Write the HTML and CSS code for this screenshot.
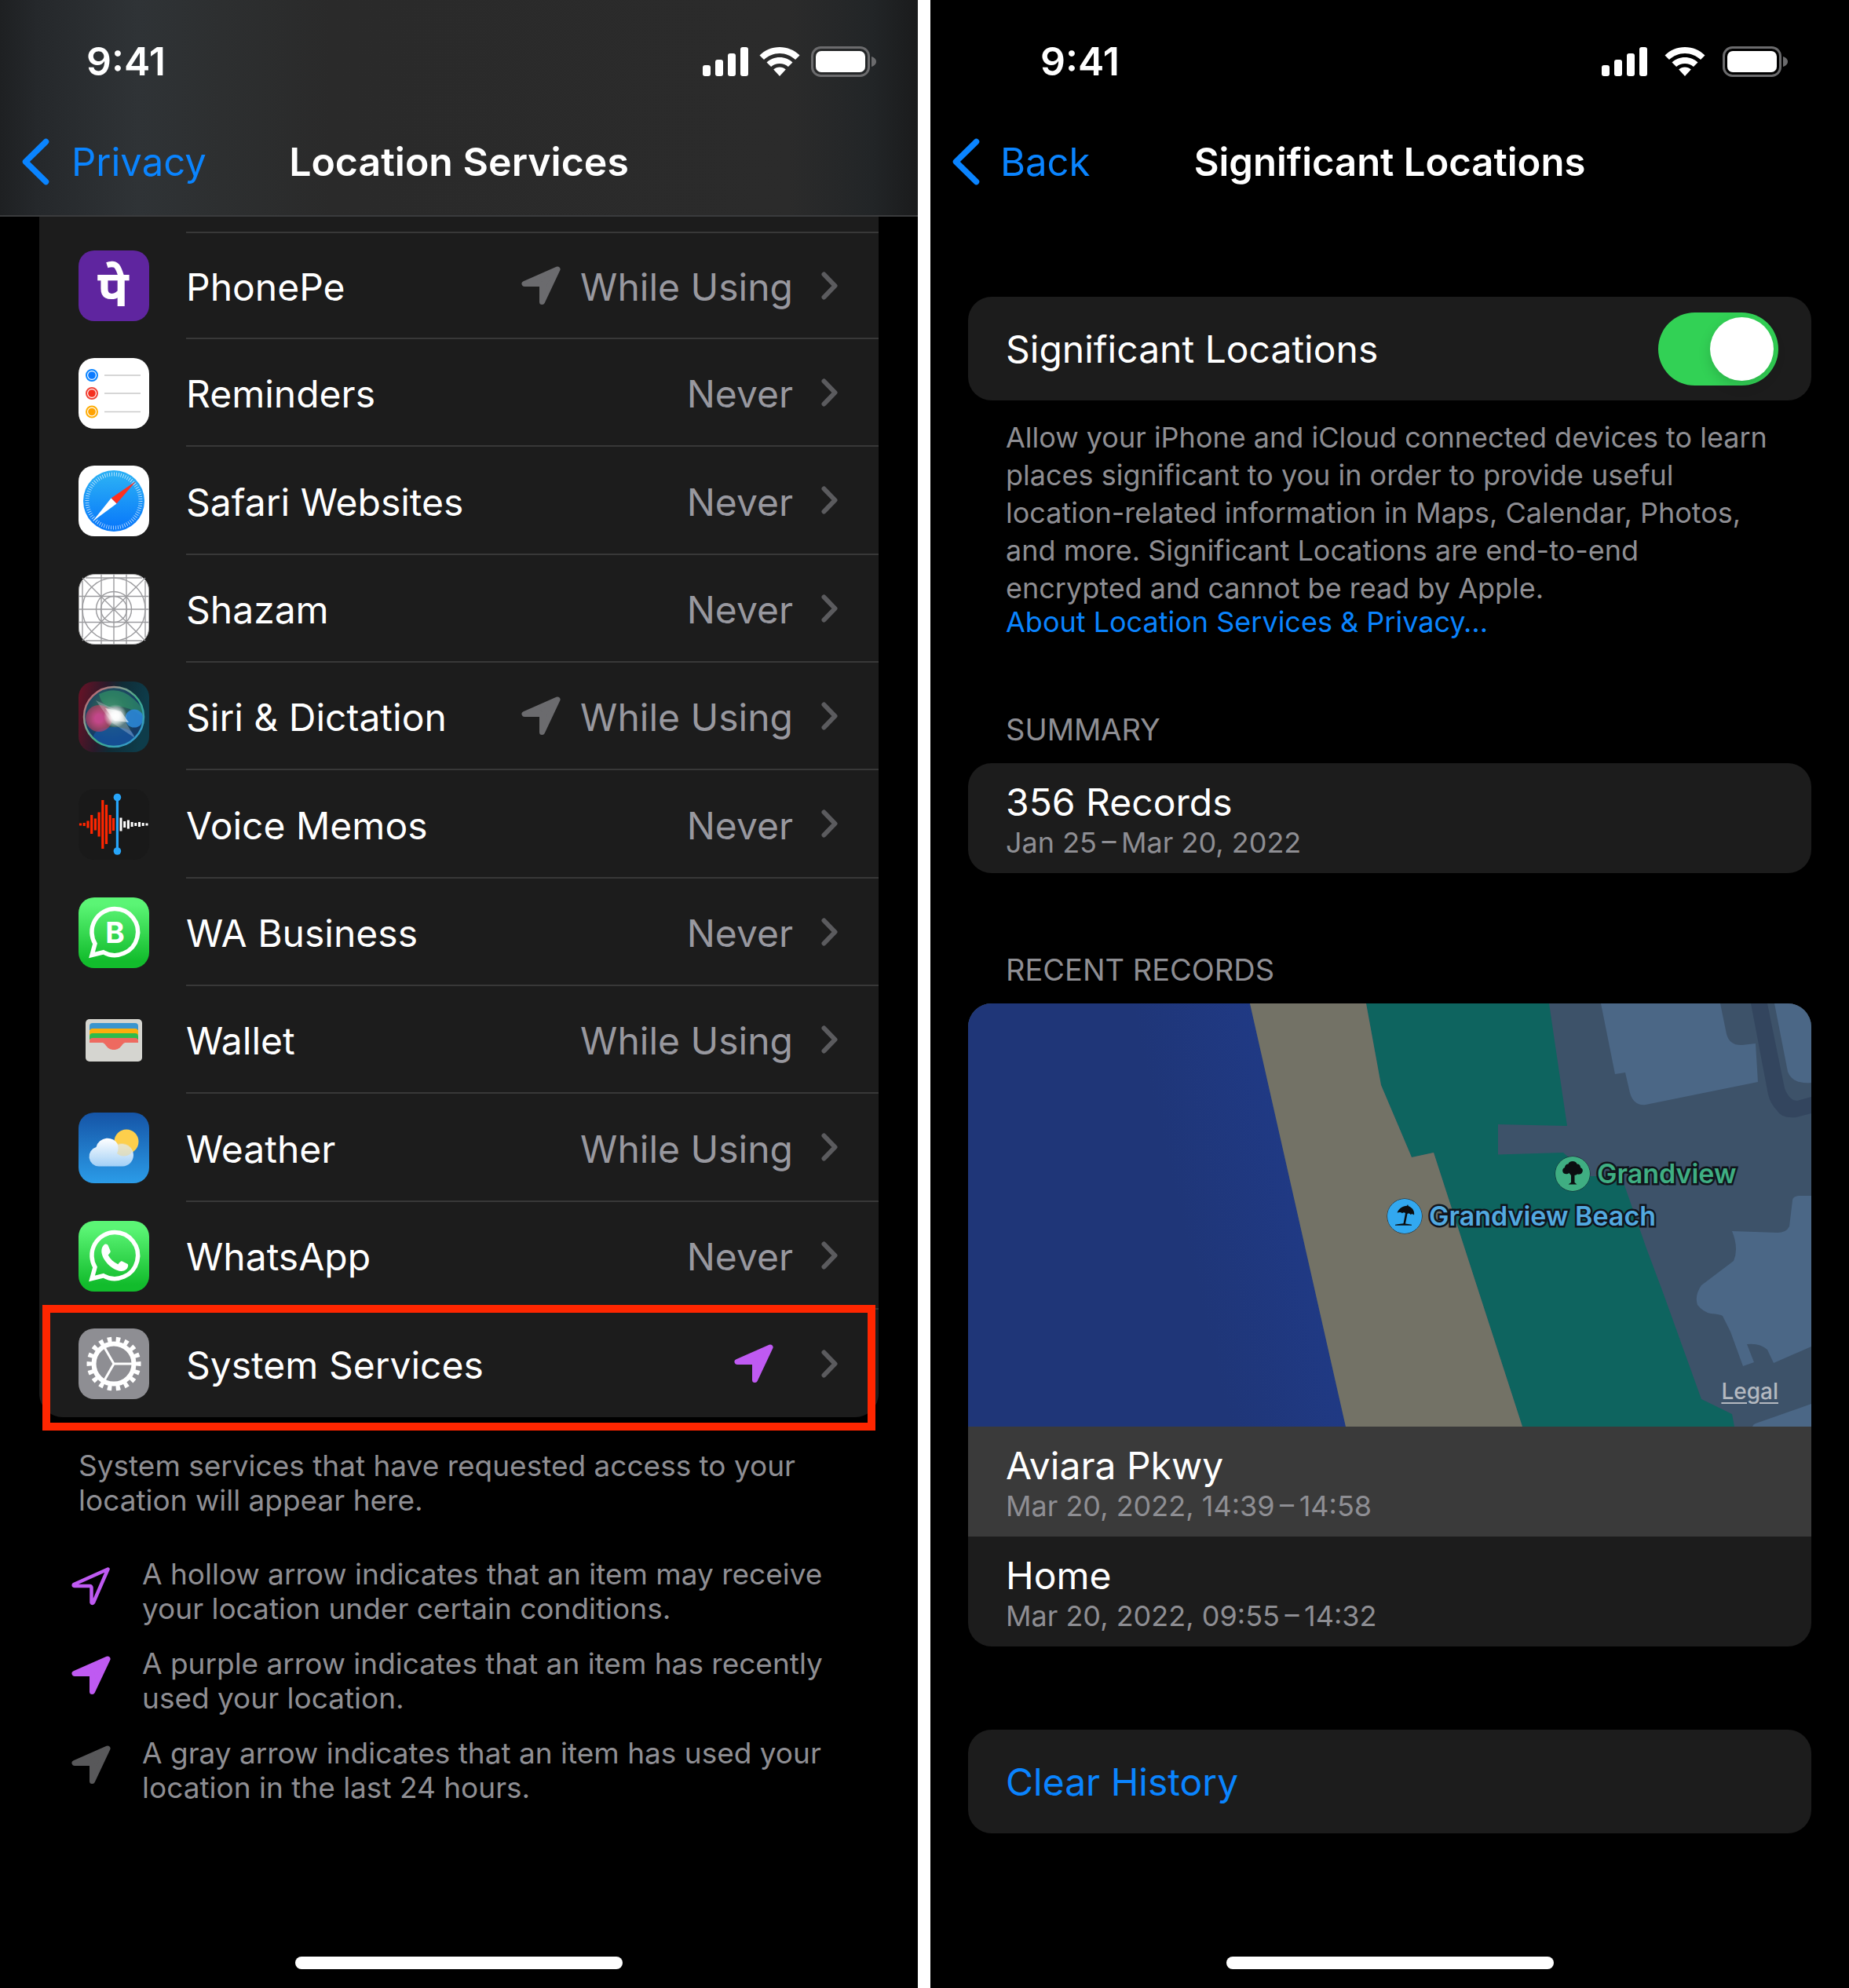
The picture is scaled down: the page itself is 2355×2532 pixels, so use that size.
FILE: index.html
```html
<!DOCTYPE html>
<html lang="en">
<head>
<meta charset="utf-8">
<meta name="viewport" content="width=device-width, initial-scale=1">
<title>Location Services</title>
<link rel="stylesheet" href="styles.css">
</head>
<body>
<svg class="defs" aria-hidden="true">
  <defs>
    <linearGradient id="green" x1="0" y1="0" x2="0" y2="1"><stop offset=".1" stop-color="#5bf575"/><stop offset=".9" stop-color="#12bc2c"/></linearGradient>
    <linearGradient id="sky" x1="0" y1="0" x2="0" y2="1"><stop offset="0" stop-color="#1554a6"/><stop offset="1" stop-color="#2b9ce8"/></linearGradient>
    <linearGradient id="cloud" x1="0" y1="0" x2="0" y2="1"><stop offset="0" stop-color="#fff"/><stop offset="1" stop-color="#a3d0f6"/></linearGradient>
    <linearGradient id="dial" x1="0" y1="0" x2="0" y2="1"><stop offset=".1" stop-color="#2aaef5"/><stop offset=".9" stop-color="#0a7bfa"/></linearGradient>
    <linearGradient id="siribg" x1="0" y1="0" x2="1" y2=".2"><stop offset="0" stop-color="#6b1226"/><stop offset=".4" stop-color="#2a1a2a"/><stop offset=".6" stop-color="#0f2c36"/><stop offset="1" stop-color="#0e3c4a"/></linearGradient>
    <linearGradient id="siriring" x1="0" y1="0" x2="1" y2="1"><stop offset="0" stop-color="#d8455e"/><stop offset=".3" stop-color="#8a9a90"/><stop offset=".55" stop-color="#3fae86"/><stop offset="1" stop-color="#2f8fe6"/></linearGradient>
    <radialGradient id="siriglow"><stop offset="0" stop-color="#fff"/><stop offset=".35" stop-color="#fff" stop-opacity=".9"/><stop offset="1" stop-color="#fff" stop-opacity="0"/></radialGradient>
    <radialGradient id="siripink"><stop offset=".3" stop-color="#c2478a"/><stop offset="1" stop-color="#d83a5e" stop-opacity=".5"/></radialGradient>
    <radialGradient id="siriball" cx=".45" cy=".4"><stop offset="0" stop-color="#6f8a84"/><stop offset=".5" stop-color="#2a5a58"/><stop offset="1" stop-color="#143a66"/></radialGradient>
    <linearGradient id="sea" gradientUnits="userSpaceOnUse" x1="270" y1="270" x2="440" y2="230"><stop offset="0" stop-color="#1f3678"/><stop offset="1" stop-color="#203a86"/></linearGradient>
    <symbol id="i-signal" viewBox="0 0 58 37"><rect x="0" y="23" width="10" height="14" rx="3"/><rect x="16" y="16" width="10" height="21" rx="3"/><rect x="32" y="8" width="10" height="29" rx="3"/><rect x="48" y="0" width="10" height="37" rx="3"/></symbol>
    <symbol id="i-wifi" viewBox="0 0 52 37"><path d="M26 0C36 0 45 4 51.500 10.500L46 16C40.600 11 33.700 8 26 8S11.400 11 6 16L.5 10.500C7 4 16 0 26 0zM26 13C32.500 13 38.300 15.400 42.500 19.500L36.900 25C34 22.400 30.200 21 26 21S18 22.400 15.100 25L9.500 19.500C13.700 15.400 19.500 13 26 13zM26 25.500C29 25.500 31.700 26.600 33.800 28.500L26 37L18.200 28.500C20.300 26.600 23 25.500 26 25.500z"/></symbol>
    <symbol id="i-battery" viewBox="0 0 83 39"><rect x="1.500" y="1.500" width="72" height="36" rx="11" fill="none" stroke="#6b6b6d" stroke-width="3"/><rect x="6" y="6" width="63" height="27" rx="7"/><path d="M77 13c3.500 1 6 3.500 6 6.500s-2.500 5.500-6 6.500z" fill="#6b6b6d"/></symbol>
    <symbol id="i-back" viewBox="0 0 36 60"><path d="M31.500 4.500L5.500 30l26 25.500" fill="none" stroke="currentColor" stroke-width="7.500" stroke-linecap="round" stroke-linejoin="round"/></symbol>
    <symbol id="i-chevron" viewBox="0 0 22 36"><path d="M3.500 3.500L17.500 18 3.500 32.500" fill="none" stroke="#5b5b5e" stroke-width="6" stroke-linecap="round" stroke-linejoin="round"/></symbol>
    <symbol id="i-arrow" viewBox="0 0 50 50"><path d="M46 4L4 22.500h20.500a2 2 0 0 1 2 2V45.500z" fill="currentColor" stroke="currentColor" stroke-width="7" stroke-linejoin="round"/></symbol>
    <symbol id="i-hollow" viewBox="0 0 50 50"><path d="M46.500 3.500L3 23q-1 2 1 2h19.500a2 2 0 0 1 2 2V46q1 2 2.500 0z" fill="none" stroke="currentColor" stroke-width="4.500" stroke-linejoin="round"/></symbol>
    <symbol id="i-bubble" viewBox="0 0 90 90"><path d="M46 14.500a29.500 29.500 0 1 1-14.200 55.300L17 73.500l4-14.600A29.500 29.500 0 0 1 46 14.500z" fill="none" stroke="#fff" stroke-width="5.500"/></symbol>
  </defs>
</svg>

<main class="screens">
  <section class="screen screen-services">
    <header class="top top-blur">
      <div class="status">
        <time class="clock">9:41</time>
        <div class="indicators">
          <svg class="signal"><use href="#i-signal"/></svg>
          <svg class="wifi"><use href="#i-wifi"/></svg>
          <svg class="battery"><use href="#i-battery"/></svg>
        </div>
      </div>
      <nav class="nav">
        <a class="back" href="#privacy"><svg><use href="#i-back"/></svg>Privacy</a>
        <h1>Location Services</h1>
      </nav>
    </header>

    <ul class="apps">
      <li><a class="app" href="#phonepe">
        <svg class="icon" viewBox="0 0 90 90"><rect width="90" height="90" rx="20" fill="#5f259f"/><text class="logo-text" x="44" y="71" text-anchor="middle">पे</text></svg>
        <span class="line"><span class="name">PhonePe</span><svg class="arrow gray"><use href="#i-arrow"/></svg><span class="value">While Using</span><svg class="chevron"><use href="#i-chevron"/></svg></span>
      </a></li>
      <li><a class="app" href="#reminders">
        <svg class="icon" viewBox="0 0 90 90"><rect width="90" height="90" rx="20" fill="#fff"/>
          <g stroke-width="2" fill="none"><circle cx="17" cy="22" r="7" stroke="#0a84ff"/><circle cx="17" cy="45" r="7" stroke="#f0453a"/><circle cx="17" cy="68.500" r="7" stroke="#fdae08"/></g>
          <circle cx="17" cy="22" r="4.800" fill="#0a7aff"/><circle cx="17" cy="45" r="4.800" fill="#f5301f"/><circle cx="17" cy="68.500" r="4.800" fill="#ffa200"/>
          <path d="M33 22h46M33 45h46M33 68.500h46" stroke="#c9c9c9" stroke-width="1.500"/></svg>
        <span class="line"><span class="name">Reminders</span><span class="value">Never</span><svg class="chevron"><use href="#i-chevron"/></svg></span>
      </a></li>
      <li><a class="app" href="#safari">
        <svg class="icon" viewBox="0 0 90 90"><rect width="90" height="90" rx="20" fill="#fff"/><circle cx="45" cy="45" r="39" fill="url(#dial)"/>
          <circle cx="45" cy="45" r="34" fill="none" stroke="#fff" stroke-opacity=".7" stroke-width="5" pathLength="144" stroke-dasharray=".6 1.400"/>
          <path d="M73 20L48.500 48.500 41.500 41.500z" fill="#ff3020"/><path d="M18 71L41.500 41.500 48.500 48.500z" fill="#fff"/></svg>
        <span class="line"><span class="name">Safari Websites</span><span class="value">Never</span><svg class="chevron"><use href="#i-chevron"/></svg></span>
      </a></li>
      <li><a class="app" href="#shazam">
        <svg class="icon" viewBox="0 0 90 90"><rect x=".5" y=".5" width="89" height="89" rx="20" fill="#fff" stroke="#aaa"/>
          <g fill="none" stroke="#9c9c9f" stroke-width="1.400"><path d="M5 9v72M29 0v90M45 0v90M61 0v90M85 9v72M9 5h72M0 28.500h90M0 45h90M0 61.500h90M9 85h72M5 5l80 80M85 5L5 85"/><circle cx="45" cy="45" r="40"/><circle cx="45" cy="45" r="22.500"/><circle cx="45" cy="45" r="16.500"/></g></svg>
        <span class="line"><span class="name">Shazam</span><span class="value">Never</span><svg class="chevron"><use href="#i-chevron"/></svg></span>
      </a></li>
      <li><a class="app" href="#siri">
        <svg class="icon" viewBox="0 0 90 90"><rect width="90" height="90" rx="20" fill="url(#siribg)"/><circle cx="45" cy="45" r="38" fill="url(#siriball)"/>
          <ellipse cx="45" cy="70" rx="26" ry="12" fill="#1657a6" opacity=".7"/><path d="M26 16Q50 4 70 22T80 44Q62 30 46 32T26 16z" fill="#2f9468" opacity=".65"/>
          <circle cx="26" cy="47" r="17" fill="url(#siripink)"/><circle cx="71" cy="47" r="11.500" fill="#2b86d6" opacity=".9"/>
          <path d="M22 24L52 38 72 72 42 52z" fill="#fff" opacity=".25"/><path d="M34 34L54 38 64 52 46 50z" fill="#fff" opacity=".6"/><circle cx="47" cy="44" r="15" fill="url(#siriglow)"/>
          <circle cx="45" cy="45" r="38" fill="none" stroke="url(#siriring)" stroke-width="2.500"/></svg>
        <span class="line"><span class="name">Siri &amp; Dictation</span><svg class="arrow gray"><use href="#i-arrow"/></svg><span class="value">While Using</span><svg class="chevron"><use href="#i-chevron"/></svg></span>
      </a></li>
      <li><a class="app" href="#voice-memos">
        <svg class="icon" viewBox="0 0 90 90"><rect width="90" height="90" rx="20" fill="#191919"/>
          <path d="M2.500 43.500v3M7.200 43v4M12 40.500v9M16.700 33v24M21.400 37.500v15M26.100 29.500v31M30.800 14v62M35.500 20v50M40.200 33v24M44.500 37v16" stroke="#ff2600" stroke-width="3.200"/>
          <path d="M54 36.500v17M58.700 41v8M63.400 39.500v11M68.100 42v6M72.800 43v4M77.500 42v6M82.200 43v4M87 43.500v3" stroke="#fff" stroke-width="3"/>
          <path d="M49.400 10v69" stroke="#27a5f9" stroke-width="3.200"/><circle cx="49.400" cy="10.500" r="4.800" fill="#27a5f9"/><circle cx="49.400" cy="79" r="4.800" fill="#27a5f9"/></svg>
        <span class="line"><span class="name">Voice Memos</span><span class="value">Never</span><svg class="chevron"><use href="#i-chevron"/></svg></span>
      </a></li>
      <li><a class="app" href="#wa-business">
        <svg class="icon" viewBox="0 0 90 90"><rect width="90" height="90" rx="20" fill="url(#green)"/><use href="#i-bubble"/><text class="logo-letter" x="46.500" y="58" text-anchor="middle">B</text></svg>
        <span class="line"><span class="name">WA Business</span><span class="value">Never</span><svg class="chevron"><use href="#i-chevron"/></svg></span>
      </a></li>
      <li><a class="app" href="#wallet">
        <svg class="icon" viewBox="0 0 90 90"><rect x="9" y="18" width="72" height="54" rx="5" fill="#d5d5d0"/>
          <path d="M14 32v-5a4 4 0 0 1 4-4h54a4 4 0 0 1 4 4v5z" fill="#3a95cf"/><path d="M14 38v-4a4 4 0 0 1 4-4h54a4 4 0 0 1 4 4v4z" fill="#fcae0c"/><path d="M14 44v-4a4 4 0 0 1 4-4h54a4 4 0 0 1 4 4v4z" fill="#2fbb4b"/>
          <path d="M14 48v-2a4 4 0 0 1 4-4h54a4 4 0 0 1 4 4v2H60c-5 0-5 9-15 9s-10-9-15-9z" fill="#ee6a60"/></svg>
        <span class="line"><span class="name">Wallet</span><span class="value">While Using</span><svg class="chevron"><use href="#i-chevron"/></svg></span>
      </a></li>
      <li><a class="app" href="#weather">
        <svg class="icon" viewBox="0 0 90 90"><rect width="90" height="90" rx="20" fill="url(#sky)"/><circle cx="61" cy="37" r="15.500" fill="#fdcf4c"/>
          <path d="M26 68.500a12.500 12.500 0 0 1-3.500-24.500 15 15 0 0 1 28-3A14.500 14.500 0 0 1 70 54c0 8-6 14.500-14 14.500z" fill="url(#cloud)"/><path d="M49 52a15 15 0 0 0 .5-12C58 37 68 42 68 49c0 5-12 10-19 3z" fill="#ead9a0" opacity=".6"/></svg>
        <span class="line"><span class="name">Weather</span><span class="value">While Using</span><svg class="chevron"><use href="#i-chevron"/></svg></span>
      </a></li>
      <li><a class="app" href="#whatsapp">
        <svg class="icon" viewBox="0 0 90 90"><rect width="90" height="90" rx="20" fill="url(#green)"/><use href="#i-bubble"/>
          <path d="M33 30c2-1 4-.5 5 2l2.500 6c.6 1.500 0 2.500-2.800 5.500 3 5.500 7 9.200 12.700 11.700 3-3.600 3.700-4.400 5.400-3.600l6 3c1.500.8 1.600 1.500 1.200 3.500-.8 4-5 6.300-9 5.900C43 63 29.500 50 29.300 38.500c0-4 1.700-7 3.700-8.500z" fill="#fff"/></svg>
        <span class="line"><span class="name">WhatsApp</span><span class="value">Never</span><svg class="chevron"><use href="#i-chevron"/></svg></span>
      </a></li>
      <li class="marked"><a class="app" href="#system-services">
        <svg class="icon" viewBox="0 0 90 90"><rect width="90" height="90" rx="20" fill="#8e8e93"/>
          <g fill="none" stroke="#fff"><circle cx="45" cy="45" r="25.500" stroke-width="6"/><circle cx="45" cy="45" r="30.500" stroke-width="8" pathLength="36" stroke-dasharray="1 1" stroke-dashoffset=".5"/><path d="M45 45h25M45 45L32.500 23.300M45 45L32.500 66.700" stroke-width="3"/></g></svg>
        <span class="line"><span class="name">System Services</span><svg class="arrow purple"><use href="#i-arrow"/></svg><svg class="chevron"><use href="#i-chevron"/></svg></span>
      </a></li>
    </ul>

    <p class="note">System services that have requested access to your location will appear here.</p>
    <ul class="legend">
      <li><svg class="arrow purple"><use href="#i-hollow"/></svg><span>A hollow arrow indicates that an item may receive your location under certain conditions.</span></li>
      <li><svg class="arrow purple"><use href="#i-arrow"/></svg><span>A purple arrow indicates that an item has recently used your location.</span></li>
      <li><svg class="arrow dim"><use href="#i-arrow"/></svg><span>A gray arrow indicates that an item has used your location in the last 24 hours.</span></li>
    </ul>
    <div class="home-bar"></div>
  </section>

  <section class="screen screen-significant">
    <header class="top">
      <div class="status">
        <time class="clock">9:41</time>
        <div class="indicators">
          <svg class="signal"><use href="#i-signal"/></svg>
          <svg class="wifi"><use href="#i-wifi"/></svg>
          <svg class="battery"><use href="#i-battery"/></svg>
        </div>
      </div>
      <nav class="nav">
        <a class="back" href="#back"><svg><use href="#i-back"/></svg>Back</a>
        <h1>Significant Locations</h1>
      </nav>
    </header>

    <div class="content">
      <div class="card setting">
        <label for="significant">Significant Locations</label>
        <input class="switch" type="checkbox" role="switch" id="significant" checked>
      </div>
      <p class="about">Allow your iPhone and iCloud connected devices to learn places significant to you in order to provide useful location-related information in Maps, Calendar, Photos, and more. Significant Locations are end-to-end encrypted and cannot be read by Apple.</p>
      <a class="about-link" href="#about">About Location Services &amp; Privacy…</a>

      <h2>SUMMARY</h2>
      <div class="card">
        <div class="record"><strong>356 Records</strong><span>Jan 25&thinsp;–&thinsp;Mar 20, 2022</span></div>
      </div>

      <h2 class="recent">RECENT RECORDS</h2>
      <div class="card">
        <div class="map">
          <svg viewBox="0 0 1074 539" preserveAspectRatio="xMidYMid slice" aria-hidden="true">
            <rect width="1074" height="539" fill="#3d5269"/>
            <path d="M0 0H359L481 539H0z" fill="url(#sea)"/>
            <path d="M507 0H740L763 156 675 154V192.500L758 190 792 220H832L864 312 885 368 934 504 973 523 976 539H706L593 190 565 196 526 104z" fill="#0e645f"/>
            <path d="M359 0H507L526 104 565 196 593 190 706 539H481z" fill="#737266"/>
            <g fill="#4b6786">
              <path d="M806 0L824 90 837 88 843 114Q848 131 863 129L1006 100 1003 51 986 53Q970 54 966 39L958 0z"/>
              <path d="M1027 0L1044 87Q1050 103 1074 101V0z"/>
              <path d="M1074 245H1058Q1050 246 1050 251L1046 284Q1042 292 1031 292L973 290Q982 312 975 328L934 359Q925 372 929 384 936 393 946 395 958 396 961 398L971 418 987 462 1001 457 992 434Q1008 432 1018 441L1026 458 1074 437z"/>
              <path d="M999 539Q1000 536 1003 535L1074 510V539z"/>
            </g>
            <path d="M997 0H1018L1040 108Q1046 124 1056 124L1074 119V140L1055 145Q1036 147 1030 136 1022 128 1019 116z" fill="#33455e"/>
          </svg>
          <span class="pin park"><svg viewBox="0 0 46 46"><circle cx="23" cy="23" r="22" fill="#3fae82" stroke="#12202a"/><path d="M23 7c3 0 5 1.500 5.500 3.500 3 0 4.500 2 4.500 4.500 2.500 1 3.500 3 2.500 5.500-1 3-4 3.500-6.500 3-1 1-2.500 1.300-3.500 1.300V34l3 2.500H17.500L21 34v-9l-2.500-3C16.500 24 11 24 10.300 20c-.5-2.500.7-4.300 2.700-5 0-2.500 2-4.500 4.500-4.500C18 8.500 20 7 23 7z" fill="#0b0d10"/></svg>Grandview</span>
          <span class="pin beach"><svg viewBox="0 0 46 46"><circle cx="23" cy="23" r="22" fill="#32a8f0" stroke="#12202a"/><path d="M27 8l.8 2C33 12 36 16.500 35 21.500c-1.500-1.300-3-1.500-4.500-.5-1-1.300-2.500-1.800-4-1L24 32.500l8 1.200v1H11v-1l10.500-1.500L24 19c-1.500-1-3-.8-4 .3-1.200-1.300-3.500-1.800-6.500-.8 2-5 7-8.700 12.500-8.700z" fill="#0b0d10"/></svg>Grandview Beach</span>
          <a class="legal" href="#legal">Legal</a>
        </div>
        <div class="record selected"><strong>Aviara Pkwy</strong><span>Mar 20, 2022, 14:39&thinsp;–&thinsp;14:58</span></div>
        <div class="record"><strong>Home</strong><span>Mar 20, 2022, 09:55&thinsp;–&thinsp;14:32</span></div>
      </div>

      <button class="card clear" type="button">Clear History</button>
    </div>
    <div class="home-bar"></div>
  </section>
</main>
</body>
</html>
```

FILE: styles.css
```css
* { box-sizing: border-box; }

body {
  margin: 0;
  background: #fff;
  color: #fff;
  font-family: Inter, "Noto Sans", sans-serif;
  font-size: 48px;
}

h1, h2, p, ul { margin: 0; padding: 0; }
ul { list-style: none; }
a { color: inherit; text-decoration: none; }
svg { display: block; flex: none; }
.defs { position: absolute; width: 0; height: 0; }

.screens {
  display: grid;
  grid-template-columns: 1169fr 1170fr;
  gap: 16px;
  min-height: 100vh;
}

.screen {
  display: flex;
  flex-direction: column;
  background: #000;
}

/* Status and navigation bars */
.top { height: 276px; }

.top-blur {
  background: linear-gradient(90deg, #1e2022 0%, #25282b 4%, #2f3336 15%, #2d2f30 24%, #2a2a2a 36%, #2b2b2b 86%, #222527 95%, #1a1b1c 100%);
  border-bottom: 2px solid #3a3b3d;
}

.status {
  display: flex;
  align-items: center;
  justify-content: space-between;
  height: 156px;
  padding: 0 53px 0 110px;
}

.clock { font-size: 50px; font-weight: 600; }

.indicators {
  display: flex;
  align-items: center;
  gap: 14px;
  fill: #fff;
}

.signal { width: 58px; height: 37px; }
.wifi { width: 52px; height: 37px; }
.battery { width: 83px; height: 39px; }

.screen-significant .status { padding: 0 78px 0 140px; }
.screen-significant .indicators { gap: 22px; }

.nav {
  display: grid;
  grid-template-columns: 1fr auto 1fr;
  align-items: center;
  height: 100px;
  padding: 0 27px;
  font-size: 49px;
}

.back {
  display: flex;
  align-items: center;
  gap: 26px;
  color: #0a84ff;
}

.screen-services .back { gap: 28px; }
.back svg { width: 36px; height: 60px; }
h1 { font-size: 49px; font-weight: 600; }
.screen-services h1 { font-size: 50px; }

/* App list */
.apps {
  margin: 0 50px;
  padding-top: 19px;
  border-radius: 0 0 30px 30px;
  background: #1c1c1c;
}

.apps li:first-child .line { border-top: 2px solid #383838; }

.app {
  display: flex;
  align-items: center;
  gap: 47px;
  padding-left: 50px;
}

.icon { width: 90px; height: 90px; overflow: visible; }

.line {
  display: flex;
  flex: 1;
  align-items: center;
  height: 137px;
  padding-right: 51px;
  border-bottom: 2px solid #383838;
}

.apps li:nth-child(3n) .line { height: 138px; }
.name, .value { padding-top: 4px; }
.name { flex: 1; }
.value { color: #98989f; }
.arrow { width: 50px; height: 50px; }
.app .arrow { margin-right: 25px; }
.chevron { width: 22px; height: 36px; margin-left: 36px; }
.gray { color: #6b6b6e; }
.purple { color: #bf5af2; }
.dim { color: #58585a; }

.logo-text { fill: #fff; font: 700 64px "Noto Sans Devanagari", "Noto Sans", sans-serif; }
.logo-letter { fill: #fff; font: 700 37px Inter, sans-serif; }

/* Red frame drawn around the last row */
.marked { position: relative; }
.marked .line { border-bottom: 0; }

.marked::after {
  content: "";
  position: absolute;
  inset: -6px 4px -17px 4px;
  border: 10px solid #ff2600;
}

.note, .legend, .about, .about-link, h2 {
  color: #8e8e93;
  font-size: 36px;
  line-height: 44px;
}

.note { margin: 40px 100px 0; }
.note, .legend { font-size: 37px; }

.legend {
  display: grid;
  gap: 26px;
  margin: 50px 91px 0;
}

.legend li { display: flex; gap: 40px; }
.legend .arrow { margin-top: 12px; }

.home-bar {
  width: 417px;
  height: 16px;
  margin: auto auto 24px;
  border-radius: 8px;
  background: #fff;
}

/* Significant Locations */
.content {
  display: flex;
  flex-direction: column;
  padding: 102px 48px 0;
}

.card {
  overflow: hidden;
  border-radius: 30px;
  background: #1c1c1c;
}

.setting {
  display: flex;
  align-items: center;
  justify-content: space-between;
  height: 132px;
  padding: 0 42px 0 48px;
}

.switch {
  display: flex;
  justify-content: flex-end;
  width: 153px;
  height: 93px;
  margin: 0;
  padding: 6px;
  appearance: none;
  border-radius: 47px;
  background: #32d155;
}

.switch::before {
  content: "";
  width: 81px;
  border-radius: 50%;
  background: #fff;
  box-shadow: 0 6px 16px rgb(0 0 0 / 15%);
}

.about {
  margin: 23px 48px 0;
  line-height: 48px;
}

.about-link {
  margin: 0 48px;
  color: #0a84ff;
  line-height: 38px;
}

h2 {
  margin: 96px 48px 21px;
  font-size: 38px;
  font-weight: 400;
}

.recent { margin-top: 101px; }

.record {
  display: grid;
  padding: 22px 48px 16px;
}

.record strong {
  font-weight: 400;
  line-height: 56px;
}

.record span {
  color: #8e8e93;
  font-size: 36px;
  line-height: 46px;
}

.selected { background: #3a3a3a; }

.map { position: relative; height: 539px; }
.map > svg { width: 100%; height: 100%; }

.pin {
  position: absolute;
  display: flex;
  align-items: center;
  gap: 8px;
  font-size: 34px;
  font-weight: 600;
  line-height: 46px;
  paint-order: stroke;
  -webkit-text-stroke: 5px #10151c;
}

.pin svg { width: 46px; height: 46px; }
.park { top: 194px; left: 747px; color: #3fae82; }
.beach { top: 248px; left: 533px; color: #52a9e0; }

.legal {
  position: absolute;
  right: 42px;
  bottom: 28px;
  color: #b4b9c0;
  font-size: 28px;
  font-weight: 500;
  line-height: 34px;
  text-decoration: underline;
  text-underline-offset: 4px;
}

.clear {
  height: 132px;
  margin-top: 106px;
  padding: 0 48px;
  border: 0;
  color: #0a84ff;
  font: inherit;
  text-align: left;
}
```
